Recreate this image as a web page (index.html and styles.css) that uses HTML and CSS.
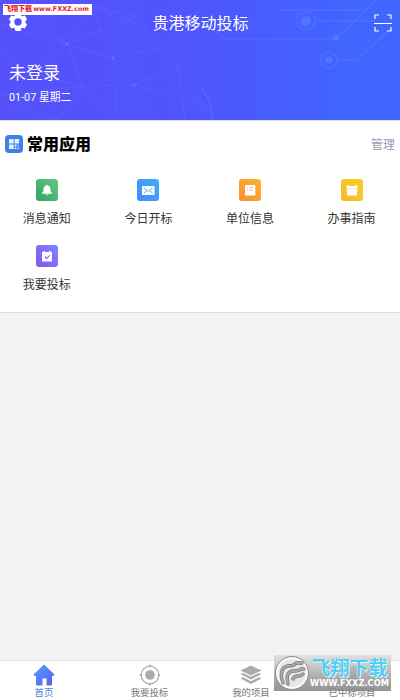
FILE: index.html
```html
<!DOCTYPE html>
<html lang="zh-CN">
<head>
<meta charset="utf-8">
<title>贵港移动投标</title>
<link rel="stylesheet" href="styles.css">
</head>
<body>
<div class="app">
  <header class="hero">
    <svg class="hero-art" viewBox="0 0 400 120" fill="none" stroke="#829cff">
      <g opacity=".15" stroke-width="1">
        <path d="M70 0Q125 14 158 48T207 120M80 0Q145 18 177 64T213 120M0 25L67 44 136 16 158 48 178 66 134 85 113 58 67 44 83 86 134 85 155 120M18 0L67 44 30 72 83 86 58 120M67 44L92 7 136 16 113 58 158 48M113 58L117 118M83 86L117 118 134 85 200 104M0 52L30 72 5 105 58 120M178 66L185 120"/>
        <path d="M0 0L67 44M92 7L113 58M0 95L83 86"/>
      </g>
      <g opacity=".2" stroke-width="1.5">
        <path d="M315 21H375M217 32L225 39H336L377 0M337 60H357L390 29M200 86Q211 98 213 120M280 10H365"/>
        <circle cx="306" cy="21" r="9"/><circle cx="329" cy="60" r="8"/>
      </g>
      <g fill="#719bff" stroke="none" opacity=".35"><circle cx="306" cy="21" r="5"/><circle cx="329" cy="60" r="3.5"/><circle cx="336" cy="38" r="3"/><circle cx="67" cy="44" r="1.5"/><circle cx="113" cy="58" r="1.5"/><circle cx="134" cy="85" r="1.5"/></g>
    </svg>
    <div class="topbar">
      <svg class="gear" viewBox="0 0 18 18"><path fill="#fff" fill-rule="evenodd" d="M6.4 0h5.2l.6 2.6 1.2.7 2.5-.8L18 6.4l-1.6 1.9v1.4l1.6 1.9-2.1 3.9-2.5-.8-1.2.7-.6 2.6H6.4l-.6-2.6-1.2-.7-2.5.8L0 11.600l1.600-1.900V8.300L0 6.400l2.100-3.900 2.500.8 1.200-.7zM9 5.300a3.700 3.700 0 1 0 0 7.400 3.700 3.700 0 0 0 0-7.400z"/></svg>
      <h1 class="title">贵港移动投标</h1>
      <svg class="scan" viewBox="0 0 18 18" fill="none" stroke="#fff" stroke-width="1.200"><path d="M1 5V1h4M13 1h4v4M17 13v4h-4M5 17H1v-4M0 9.500h18"/></svg>
    </div>
    <div class="login">未登录</div>
    <div class="date">01-07 星期二</div>
    <div class="site-tag"><b class="tag-name">飞翔下载</b><b class="tag-url">www.FXXZ.com</b></div>
  </header>

  <main class="panel">
    <div class="panel-head">
      <svg class="apps-icon" viewBox="0 0 18 18"><rect width="18" height="18" rx="4" fill="#3f80e8"/><g fill="#e5efff"><rect x="4" y="4" width="4.600" height="4.600" rx=".7"/><rect x="9.500" y="4" width="4.600" height="4.600" rx=".7"/><rect x="4" y="9.500" width="4.600" height="4.600" rx=".7"/><path d="M9.500 9.500h2v2h-2zM12.500 12.500H14V14h-1.500zM9.500 12.500h1.800V14H9.500z"/></g><path d="M12.500 9.500h1.500v2h-1.500z" fill="#8eb9ff"/></svg>
      <h2 class="panel-title">常用应用</h2>
      <span class="manage">管理</span>
    </div>
    <div class="grid">
      <div class="item"><div class="tile green"><svg viewBox="0 0 22 22"><path fill="#fff" d="M10 6.500Q11 5 12 6.500C14.300 7.200 14.500 9 14.500 12l1.500 2v.8H6V14l1.500-2c0-3 .2-4.800 2.500-5.500zM9.500 15.500h3Q11 17.500 9.500 15.500z"/></svg></div><span>消息通知</span></div>
      <div class="item"><div class="tile blue"><svg viewBox="0 0 22 22"><rect x="5" y="7" width="12.500" height="9" fill="#fff"/><path d="M7 9l4.200 3.500L15.500 9M7 14l2.500-2M15.500 14L13 12" fill="none" stroke="#4a9dfa" stroke-width=".9"/></svg></div><span>今日开标</span></div>
      <div class="item"><div class="tile orange"><svg viewBox="0 0 22 22"><rect x="6" y="6" width="10.300" height="10.500" rx=".5" fill="#fff"/><path d="M8 8.500h1m1 0h4M8 11h1m1 0h4" stroke="#f8b565" stroke-width=".8"/></svg></div><span>单位信息</span></div>
      <div class="item"><div class="tile yellow"><svg viewBox="0 0 22 22"><path fill="#fff" d="M5.500 7h1V6h1.500v1h6V6h1.500v1h1v3h-.5v6.500H6V10h-.5z"/><path d="M6.500 9.500H9m1 0h2m1 0h2.500" stroke="#f4d36a" stroke-width=".7"/></svg></div><span>办事指南</span></div>
      <div class="item"><div class="tile purple"><svg viewBox="0 0 22 22"><path fill="#fff" d="M6 7h1.500V6H9v1h4V6h1.500v1H16v9.500H6z"/><path d="M8.800 11.500l1.900 1.900 3-3" fill="none" stroke="#8065ef" stroke-width="1.100"/></svg></div><span>我要投标</span></div>
    </div>
  </main>

  <nav class="tabs">
    <div class="tab active"><svg viewBox="0 0 22 22"><defs><linearGradient id="home" x2="1" y2="1"><stop stop-color="#5a9aff"/><stop offset="1" stop-color="#5362f5"/></linearGradient></defs><path fill="url(#home)" d="M11 .5L21.500 10.500 20.500 12H19v8.500q0 1-1 1h-4.500V14.500h-4v7H4q-1 0-1-1V12H1.500L.5 10.500z"/></svg><span>首页</span></div>
    <div class="tab"><svg viewBox="0 0 22 22"><circle cx="11" cy="11" r="8.800" fill="none" stroke="#b0b0b0" stroke-width="1.200"/><circle cx="11" cy="11" r="4.800" fill="#aaa"/><path d="M11 .8V3M11 19v2.200M.8 11H3M19 11h2.200" stroke="#aaa" stroke-width="1.800"/></svg><span>我要投标</span></div>
    <div class="tab"><svg viewBox="0 0 22 22"><g fill="#aaa"><path d="M11 1.500L21.500 6.500 11 11.500.5 6.500z"/><path d="M.5 10L3 8.900l8 3.900 8-3.900 2.500 1.100L11 15.500z"/><path d="M.5 14.500L3 13.300l8 3.900 8-3.900 2.500 1.200L11 20z"/></g></svg><span>我的项目</span></div>
    <div class="tab"><svg viewBox="0 0 22 22"><path d="M4 2h14v18H4z" fill="#aaa"/></svg><span>已中标项目</span></div>
  </nav>

  <div class="stamp">
    <svg class="stamp-logo" viewBox="0 0 36 36"><circle cx="18" cy="18" r="16.500" fill="#e7e7e7" stroke="#8d8d8d"/><circle cx="18" cy="18" r="14.800" fill="none" stroke="#fff" stroke-width="1.500"/><g fill="none" stroke-linecap="round" stroke-linejoin="round"><path id="wing" d="M9 28C6 20 7 12 14 11q6 0 8-3h6M14 29C12 20 14 16 20 16q5 0 7-2h3M19 24q1-3 5-3 3 0 5-2" stroke="#777" stroke-width="3.400"/><path d="M9 28C6 20 7 12 14 11q6 0 8-3h6M14 29C12 20 14 16 20 16q5 0 7-2h3M19 24q1-3 5-3 3 0 5-2" stroke="#a9a9a9" stroke-width="2"/></g></svg>
    <div class="stamp-copy"><b class="stamp-name">飞翔下载</b><b class="stamp-url">WWW.FXXZ.COM</b></div>
  </div>
</div>
</body>
</html>
```
FILE: styles.css
```css
* { box-sizing: border-box; }
body { margin: 0; font-family: Roboto, "Noto Sans CJK SC", sans-serif; }
svg { display: block; }
h1, h2 { margin: 0; }
.app { position: relative; width: 400px; height: 700px; display: flex; flex-direction: column; background: #f3f3f3; overflow: hidden; }
.hero { position: relative; height: 120px; flex: none; padding: 14px 8px 0 9px; color: #fff; background: linear-gradient(90deg, #5451fa 0%, #5054fd 45%, #4164ff 85%, #3f67ff 100%); }
.hero-art { position: absolute; inset: 0; width: 400px; height: 120px; }
.topbar { position: relative; display: flex; justify-content: space-between; height: 20px; }
.gear { width: 18px; height: 18px; margin-top: -1px; }
.scan { width: 18px; height: 18px; }
.title { font-size: 16px; line-height: 20px; font-weight: 400; }
.login { position: relative; margin-top: 27px; font-size: 17px; line-height: 24px; }
.date { position: relative; margin-top: 5px; font-size: 10.8px; line-height: 16px; }
.site-tag { position: absolute; left: 3px; top: 4px; width: 89px; height: 11px; display: flex; align-items: center; justify-content: space-between; padding: 0 3px 0 1px; background: #fff; color: #e3232d; white-space: nowrap; line-height: 11px; }
.tag-name { font-size: 7px; font-weight: 900; }
.tag-url { font-family: "DejaVu Sans", sans-serif; font-size: 6.4px; }
.panel { height: 193px; flex: none; background: #fff; border-top: 1px solid #d8daff; border-bottom: 1px solid #dedede; }
.panel-head { display: flex; align-items: center; height: 46px; padding: 0 5px; }
.apps-icon { width: 18px; height: 18px; }
.panel-title { margin: 2px 0 0 4px; font-size: 16px; font-weight: 900; line-height: 24px; color: #000; }
.manage { margin: -2px 0 0 auto; font-size: 12px; color: #9999b0; }
.grid { display: grid; grid-template-columns: repeat(4, 101.6px); grid-auto-rows: 65.5px; margin: 12px 0 0 -4px; }
.item { display: flex; flex-direction: column; align-items: center; font-size: 12px; line-height: 18px; color: #333; }
.item span { margin-top: 9px; }
.tile { width: 22px; height: 22px; border-radius: 3px; }
.green { background: linear-gradient(225deg, #62c989, #31a460); }
.blue { background: linear-gradient(225deg, #41adfc, #438cf5); }
.orange { background: linear-gradient(225deg, #fdb52e, #f98c34); }
.yellow { background: linear-gradient(225deg, #f8cf26, #f0b92a); }
.purple { background: linear-gradient(45deg, #8753ee, #7988ff); }
.tabs { display: grid; grid-template-columns: 104px 107px 96px 106px; margin: auto 0 0 -8px; height: 40px; flex: none; width: 413px; background: #fff; border-top: 1px solid #e2e2e2; }
.tab { display: flex; flex-direction: column; align-items: center; padding-top: 3px; font-size: 9.4px; line-height: 13px; color: #777; }
.tab svg { width: 22px; height: 22px; }
.tab.active { color: #4e83dc; }
.stamp { position: absolute; left: 274px; top: 655px; width: 117px; height: 36px; display: flex; background: linear-gradient(rgba(222,222,222,.85), rgba(158,158,158,.88) 65%, rgba(133,133,133,.88)); }
.stamp-logo { width: 36px; height: 36px; flex: none; }
.stamp-copy { display: flex; flex-direction: column; align-items: center; width: 79px; white-space: nowrap; }
.stamp-name { margin-top: 3px; font-size: 19px; line-height: 21px; font-weight: 700; color: #4fcdf5; text-shadow: 0 0 1px #fff, 1px 1px 0 #e6f9ff; }
.stamp-url { font-family: "DejaVu Sans", sans-serif; font-size: 8.3px; line-height: 9px; color: #fff; }
```
